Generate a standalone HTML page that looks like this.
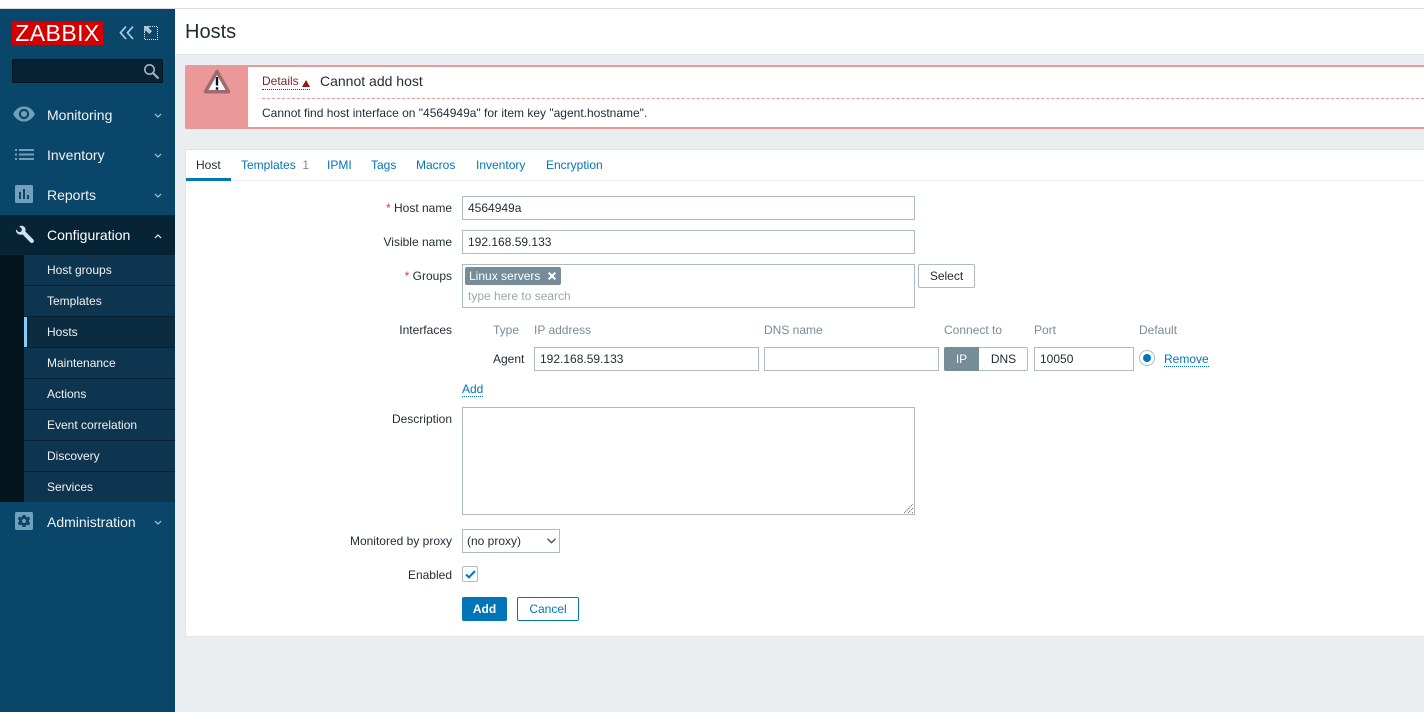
<!DOCTYPE html>
<html><head><meta charset="utf-8"><title>Hosts</title>
<style>
*{box-sizing:border-box;margin:0;padding:0}
html,body{width:1424px;height:712px;overflow:hidden;background:#fff;font-family:"Liberation Sans",Arial,sans-serif;font-size:12px;color:#1f2c33}
.a{position:absolute;white-space:nowrap}
svg{position:absolute;display:block}
.nav{left:47px;font-size:14px;color:#f2f2f2;line-height:16px}
.sub{left:47px;color:#f2f2f2;line-height:14px}
.row{position:absolute;left:24px;width:151px;height:1px;background:#06212f}
.lbl{right:972px;line-height:14px;color:#1f2c33}
.star{color:#e33734}
.inp{position:absolute;height:24px;border:1px solid #acbbc4;background:#fff;line-height:22px;padding-left:5px;color:#1f2c33}
.th{color:#768d99;line-height:14px}
.tab{top:158px;line-height:14px;color:#0275b8}
.lnk{color:#0275b8;border-bottom:1px dotted #0275b8;line-height:14px}
</style></head><body>

<div class="a" style="left:0;top:8px;width:1424px;height:1px;background:#d9dcde"></div>
<div class="a" style="left:175px;top:54px;width:1249px;height:658px;background:#ebeef0;border-top:1px solid #dfe4e7"></div>

<!-- sidebar -->
<div class="a" style="left:0;top:9px;width:175px;height:703px;background:#0a466a"></div>
<div class="a" style="left:12px;top:21px;width:91px;height:24px;background:#d40000"></div>
<div class="a" style="left:12px;top:21px;width:91px;height:24px;color:#fff;font-size:23px;line-height:24px;text-align:center;letter-spacing:.45px">ZABBIX</div>
<svg style="left:119px;top:26px" width="16" height="14" viewBox="0 0 16 14" fill="none" stroke="#a7cbdf" stroke-width="1.7"><path d="M7 0.5 L1.5 6.7 L7 13M14 0.5 L8.5 6.7 L14 13"/></svg>
<svg style="left:144px;top:26px" width="14" height="14" viewBox="0 0 14 14" fill="none"><path d="M6 .5H13.5V13.5H.5V6" stroke="#d6e6ef" stroke-dasharray="1 1"/><path d="M0 0H6.5L4.6 1.9 8 5.3 5.3 8 1.9 4.6 0 6.5Z" fill="#a7cbdf"/></svg>
<div class="a" style="left:12px;top:59px;width:151px;height:24px;background:#072232;border:1px solid #04141d;border-radius:2px"></div>
<svg style="left:143px;top:63px" width="17" height="17" viewBox="0 0 17 17" fill="none" stroke="#9fb6c4" stroke-width="1.6"><circle cx="6.5" cy="6.5" r="4.7"/><path d="M10 10 L15.5 15.5" stroke-width="2.2"/></svg>

<svg style="left:13px;top:106px" width="22" height="16" viewBox="0 0 22 16"><path fill="#71a0bb" fill-rule="evenodd" d="M11 .5C6 .5 2.2 3.600 .2 8 2.200 12.400 6 15.500 11 15.500S19.800 12.400 21.800 8C19.800 3.600 16 .5 11 .5ZM11 2.800A5.200 5.200 0 1 1 11 13.200 5.200 5.200 0 0 1 11 2.800ZM11 5A3 3 0 1 0 11 11 3 3 0 0 0 11 5Z"/></svg>
<div class="a nav" style="top:107px">Monitoring</div>
<svg style="left:15px;top:149px" width="19" height="11" viewBox="0 0 19 11" fill="#71a0bb"><path d="M0 0h2v2H0zM0 4.500h2v2H0zM0 9h2v2H0zM4 0h15v2H4zM4 4.500h15v2H4zM4 9h15v2H4z"/></svg>
<div class="a nav" style="top:147px">Inventory</div>
<svg style="left:15px;top:185px" width="18" height="18" viewBox="0 0 18 18"><rect width="18" height="18" rx="1.500" fill="#71a0bb"/><path d="M4 7h2v7H4zM8 4h2v10H8zM12 10h2v4h-2z" fill="#0a466a"/></svg>
<div class="a nav" style="top:187px">Reports</div>
<div class="a" style="left:0;top:215px;width:175px;height:40px;background:#072436"></div>
<svg style="left:15px;top:225px" width="19" height="19" viewBox="0 0 19 19"><path fill="#d2e3ed" d="M1 4.500 3.800 7.200 6.300 6.500 7 4 4.300 1.300C6.300 .3 8.700 .8 9.800 2.500 10.800 4 10.800 5.300 10.300 6.500L18.300 14.500C19.100 15.500 19.100 16.500 18.300 17.400 17.400 18.300 16.200 18.300 15.300 17.400L7.500 9.400C6 10 4.500 9.800 3 9 1.300 7.800.6 6.200 1 4.500Z"/></svg>
<div class="a nav" style="top:227px;color:#fff">Configuration</div>

<div class="a" style="left:0;top:255px;width:24px;height:247px;background:#04141d"></div>
<div class="a" style="left:24px;top:255px;width:151px;height:247px;background:#0e3550"></div>
<div class="a" style="left:24px;top:317px;width:151px;height:30px;background:#0a2b40"></div>
<div class="a" style="left:24px;top:317px;width:3px;height:30px;background:#84cdff"></div>
<div class="row" style="top:285px"></div><div class="row" style="top:316px"></div><div class="row" style="top:347px"></div><div class="row" style="top:378px"></div><div class="row" style="top:409px"></div><div class="row" style="top:440px"></div><div class="row" style="top:471px"></div>
<div class="a sub" style="top:263px">Host groups</div>
<div class="a sub" style="top:294px">Templates</div>
<div class="a sub" style="top:325px">Hosts</div>
<div class="a sub" style="top:356px">Maintenance</div>
<div class="a sub" style="top:387px">Actions</div>
<div class="a sub" style="top:418px">Event correlation</div>
<div class="a sub" style="top:449px">Discovery</div>
<div class="a sub" style="top:480px">Services</div>

<svg style="left:15px;top:512px" width="18" height="18" viewBox="0 0 18 18"><rect width="18" height="18" rx="1.500" fill="#71a0bb"/><path fill="#0a466a" fill-rule="evenodd" d="M7.500 3H10.500L10.900 4.800 12.200 5.400 13.800 4.500 15.300 7 13.900 8.200V9.800L15.300 11 13.800 13.500 12.200 12.600 10.900 13.200 10.500 15H7.500L7.100 13.200 5.800 12.600 4.200 13.500 2.700 11 4.100 9.800V8.200L2.700 7 4.200 4.500 5.800 5.400 7.100 4.800ZM9 7A2 2 0 1 0 9 11 2 2 0 0 0 9 7Z"/></svg>
<div class="a nav" style="top:514px">Administration</div>

<svg style="left:154px;top:113px" width="8" height="5" viewBox="0 0 8 5" fill="none" stroke="#a7cbdf" stroke-width="1.200"><path d="M1 1 4 4 7 1"/></svg>
<svg style="left:154px;top:153px" width="8" height="5" viewBox="0 0 8 5" fill="none" stroke="#a7cbdf" stroke-width="1.200"><path d="M1 1 4 4 7 1"/></svg>
<svg style="left:154px;top:193px" width="8" height="5" viewBox="0 0 8 5" fill="none" stroke="#a7cbdf" stroke-width="1.200"><path d="M1 1 4 4 7 1"/></svg>
<svg style="left:154px;top:234px" width="8" height="5" viewBox="0 0 8 5" fill="none" stroke="#e8f1f6" stroke-width="1.200"><path d="M1 4 4 1 7 4"/></svg>
<svg style="left:154px;top:520px" width="8" height="5" viewBox="0 0 8 5" fill="none" stroke="#a7cbdf" stroke-width="1.200"><path d="M1 1 4 4 7 1"/></svg>

<!-- header -->
<div class="a" style="left:185px;top:20px;font-size:20px;line-height:24px;color:#1f2c33">Hosts</div>

<!-- message -->
<div class="a" style="left:185px;top:65px;width:1239px;height:64px;background:#ec9898;border-radius:2px 0 0 2px"></div>
<div class="a" style="left:248px;top:67px;width:1176px;height:60px;background:#fff"></div>
<svg style="left:203px;top:69px" width="28" height="26" viewBox="0 0 28 26"><path d="M14 2.500 2.500 22.800H25.500Z" fill="#fff" stroke="#9c6a70" stroke-width="3.500" stroke-linejoin="round"/><path d="M12.800 8H15.200V16.500H12.800ZM12.800 18.300H15.200V20.700H12.800Z" fill="#111"/></svg>
<div class="a" style="left:262px;top:74px;line-height:14px;color:#7c1f2a;border-bottom:1px dotted #7c1f2a;padding-bottom:1px;width:48px;height:16px">Details</div>
<svg style="left:302px;top:80px" width="8" height="7" viewBox="0 0 8 7"><path d="M4 0 8 7H0Z" fill="#8b1a1a"/></svg>
<div class="a" style="left:320px;top:73px;font-size:14px;line-height:16px;color:#1f2c33">Cannot add host</div>
<div class="a" style="left:262px;top:98px;width:1162px;height:1px;border-top:1px dashed #ec9898"></div>
<div class="a" style="left:262px;top:106px;line-height:14px;color:#1f2c33">Cannot find host interface on "4564949a" for item key "agent.hostname".</div>

<!-- form panel -->
<div class="a" style="left:185px;top:149px;width:1239px;height:488px;background:#fff;border:1px solid #dfe4e7;border-right:0"></div>
<div class="a" style="left:186px;top:180px;width:1238px;height:1px;background:#ebeef0"></div>
<div class="a" style="left:186px;top:178px;width:45px;height:3px;background:#0275b8"></div>
<div class="a tab" style="left:196px;color:#1f2c33">Host</div>
<div class="a tab" style="left:241px">Templates <span style="color:#768d99">&nbsp;1</span></div>
<div class="a tab" style="left:327px">IPMI</div>
<div class="a tab" style="left:371px">Tags</div>
<div class="a tab" style="left:416px">Macros</div>
<div class="a tab" style="left:476px">Inventory</div>
<div class="a tab" style="left:546px">Encryption</div>

<div class="a lbl" style="top:201px"><span class="star">*</span> Host name</div>
<div class="inp" style="left:462px;top:196px;width:453px">4564949a</div>
<div class="a lbl" style="top:235px">Visible name</div>
<div class="inp" style="left:462px;top:230px;width:453px">192.168.59.133</div>
<div class="a lbl" style="top:269px"><span class="star">*</span> Groups</div>
<div class="inp" style="left:462px;top:264px;width:453px;height:44px"></div>
<div class="a" style="left:465px;top:267px;width:96px;height:18px;background:#768d99;border-radius:2px;color:#fff;line-height:18px;padding-left:4px">Linux servers</div>
<svg style="left:548px;top:272px" width="8" height="8" viewBox="0 0 8 8" stroke="#fff" stroke-width="2"><path d="M.7 .7 7.300 7.300M7.300 .7 .7 7.300"/></svg>
<div class="a" style="left:468px;top:289px;line-height:14px;color:#9aa8b0">type here to search</div>
<div class="a" style="left:918px;top:264px;width:57px;height:24px;border:1px solid #acbbc4;border-radius:2px;text-align:center;line-height:22px;color:#1f2c33;background:#fff">Select</div>

<div class="a lbl" style="top:323px">Interfaces</div>
<div class="a th" style="left:493px;top:323px">Type</div>
<div class="a th" style="left:534px;top:323px">IP address</div>
<div class="a th" style="left:764px;top:323px">DNS name</div>
<div class="a th" style="left:944px;top:323px">Connect to</div>
<div class="a th" style="left:1034px;top:323px">Port</div>
<div class="a th" style="left:1139px;top:323px">Default</div>
<div class="a" style="left:493px;top:352px;line-height:14px">Agent</div>
<div class="inp" style="left:534px;top:347px;width:225px">192.168.59.133</div>
<div class="inp" style="left:764px;top:347px;width:175px"></div>
<div class="a" style="left:944px;top:347px;width:84px;height:24px;border:1px solid #acbbc4;border-radius:2px;background:#fff;text-align:center;line-height:22px;padding-left:35px">DNS</div>
<div class="a" style="left:944px;top:347px;width:35px;height:24px;background:#768d99;border-radius:2px 0 0 2px;color:#fff;text-align:center;line-height:24px">IP</div>
<div class="inp" style="left:1034px;top:347px;width:100px">10050</div>
<div class="a" style="left:1139px;top:350px;width:16px;height:16px;border:1px solid #acbbc4;border-radius:50%;background:#fff"></div>
<div class="a" style="left:1143px;top:354px;width:8px;height:8px;border-radius:50%;background:#0275b8"></div>
<div class="a lnk" style="left:1164px;top:352px">Remove</div>
<div class="a lnk" style="left:462px;top:382px">Add</div>

<div class="a lbl" style="top:412px">Description</div>
<div class="inp" style="left:462px;top:407px;width:453px;height:108px"></div>
<svg style="left:904px;top:504px" width="10" height="10" viewBox="0 0 10 10" stroke="#555" stroke-width="1" stroke-dasharray="1 1"><path d="M0 9 9 0M4 9 9 4M8 9 9 8"/></svg>

<div class="a lbl" style="top:534px">Monitored by proxy</div>
<div class="inp" style="left:462px;top:529px;width:98px;padding-left:4px">(no proxy)</div>
<svg style="left:547px;top:538px" width="9" height="6" viewBox="0 0 9 6" fill="none" stroke="#3d4a52" stroke-width="1.300"><path d="M.5 .7 4.500 4.700 8.500 .7"/></svg>
<div class="a lbl" style="top:568px">Enabled</div>
<div class="a" style="left:462px;top:566px;width:16px;height:16px;border:1px solid #acbbc4;border-radius:2px;background:#fff"></div>
<svg style="left:465px;top:570px" width="11" height="9" viewBox="0 0 11 9" fill="none" stroke="#0275b8" stroke-width="2"><path d="M1 4.500 4 7.300 10 1"/></svg>
<div class="a" style="left:462px;top:597px;width:45px;height:24px;background:#0275b8;border-radius:2px;color:#fff;text-align:center;line-height:24px;font-weight:bold">Add</div>
<div class="a" style="left:517px;top:597px;width:62px;height:24px;border:1px solid #0275b8;border-radius:2px;background:#fff;color:#0275b8;text-align:center;line-height:22px">Cancel</div>
</body></html>
